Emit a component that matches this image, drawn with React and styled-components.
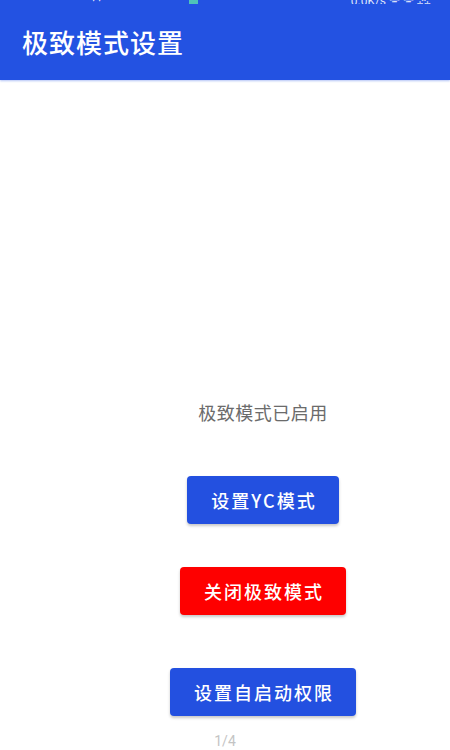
import React from "react";
import styled, { createGlobalStyle } from "styled-components";

const Global = createGlobalStyle`
  html, body { margin: 0; padding: 0; background: #ffffff; }
  body { font-family: "Noto Sans CJK SC", "Noto Sans", Roboto, sans-serif; }
`;

const Page = styled.div`
  width: 450px;
  height: 750px;
  display: flex;
  flex-direction: column;
  overflow: hidden;
  background: #ffffff;
`;

const Header = styled.header`
  height: 81px;
  background: #2352e2;
  display: flex;
  flex-direction: column;
  box-shadow: 0 1px 2px rgba(35, 82, 226, 0.35);
  position: relative;
  z-index: 1;
`;

const StatusStrip = styled.div`
  height: 4px;
  overflow: hidden;
  display: flex;
  align-items: flex-end;
  justify-content: space-between;
  padding: 0 20px 0 92px;
`;

const StatusText = styled.span`
  font-family: Roboto, sans-serif;
  font-size: 12px;
  line-height: 12px;
  color: rgba(255, 255, 255, 0.85);
  transform: translateY(3px);
  display: flex;
  gap: 8px;
  align-items: flex-end;
`;

const GreenMark = styled.span`
  display: inline-block;
  width: 9px;
  height: 8px;
  background: #4fc3b8;
  margin-left: 80px;
`;

const Title = styled.h1`
  margin: 0;
  padding: 0 22px;
  flex: 1;
  display: flex;
  align-items: center;
  padding-bottom: 1px;
  font-size: 26px;
  font-weight: 500;
  color: #ffffff;
  letter-spacing: 1px;
`;

const Main = styled.main`
  display: flex;
  flex-direction: column;
  align-items: center;
  padding-left: 76px;
`;

const Status = styled.p`
  margin: 320px 0 0;
  font-size: 18px;
  line-height: 24px;
  color: #6b6b6b;
  letter-spacing: 0.5px;
`;

const ActionButton = styled.button`
  margin-top: ${(p) => p.$gap}px;
  height: 48px;
  padding: 0 22px 0 24px;
  border: none;
  border-radius: 4px;
  background: ${(p) => (p.$danger ? "#fe0000" : "#2350e0")};
  color: #ffffff;
  font-family: "Noto Sans CJK SC", "Noto Sans", sans-serif;
  font-size: 18px;
  font-weight: 500;
  letter-spacing: 2px;
  box-shadow: 0 2px 3px rgba(0, 0, 0, 0.22);
  cursor: pointer;
`;

const Pager = styled.div`
  margin-top: 16px;
  text-align: center;
  font-family: Roboto, sans-serif;
  font-size: 14px;
  line-height: 18px;
  color: #c4c4c4;
`;

export default function App() {
  return (
    <>
      <Global />
      <Page>
        <Header>
          <StatusStrip>
            <StatusText>
              <span>· ·</span>
              <GreenMark />
            </StatusText>
            <StatusText>0.0K/s ᯤ ᯤ ⁂</StatusText>
          </StatusStrip>
          <Title>极致模式设置</Title>
        </Header>
        <Main>
          <Status>极致模式已启用</Status>
          <ActionButton $gap={52}>设置YC模式</ActionButton>
          <ActionButton $gap={43} $danger>关闭极致模式</ActionButton>
          <ActionButton $gap={53}>设置自启动权限</ActionButton>
        </Main>
        <Pager>1/4</Pager>
      </Page>
    </>
  );
}
